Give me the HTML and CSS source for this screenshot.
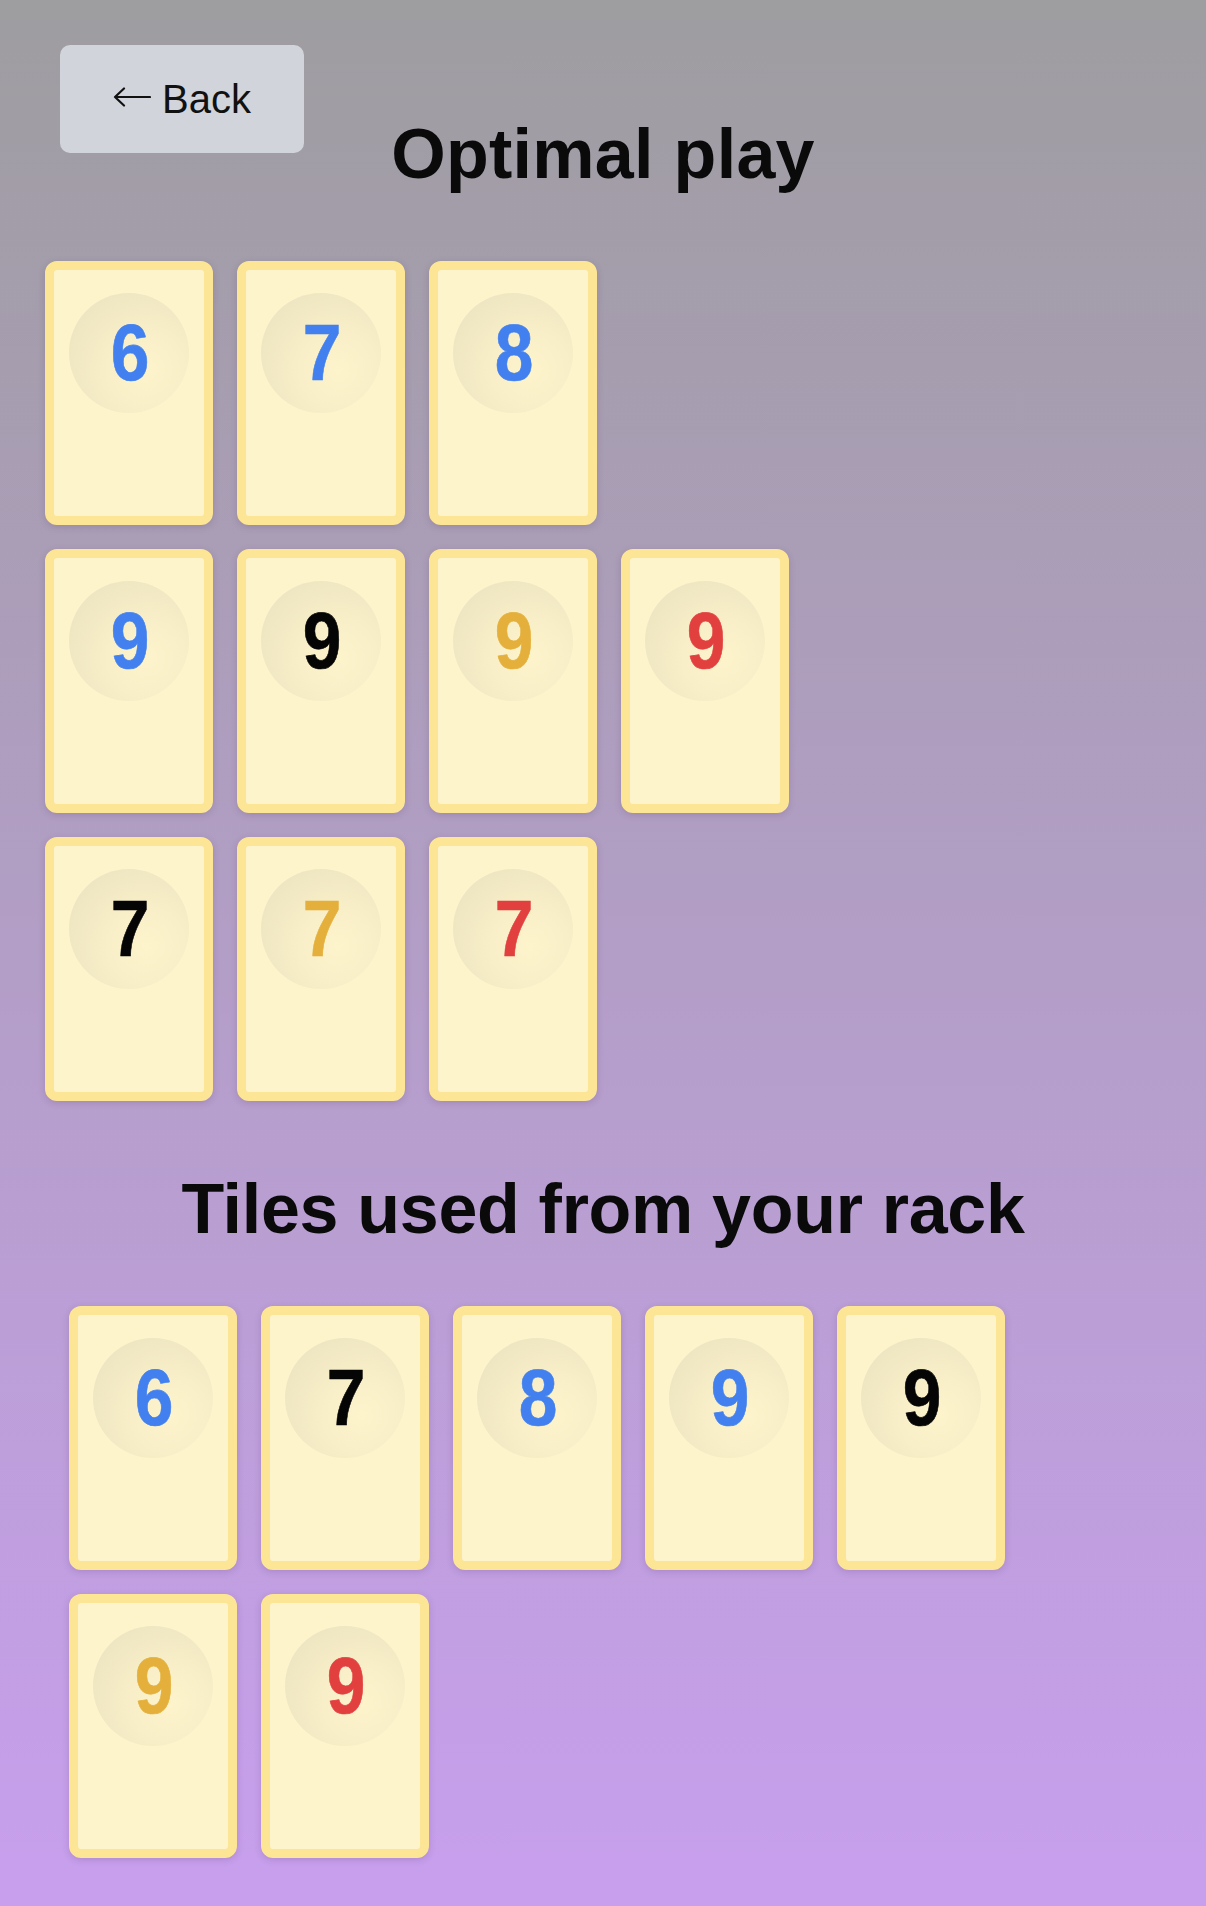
FILE: index.html
```html
<!DOCTYPE html>
<html lang="en">
<head>
<meta charset="utf-8">
<title>Optimal play</title>
<link rel="stylesheet" href="styles.css">
</head>
<body>
<button class="back-btn" type="button"><svg class="arrow" width="38" height="20" viewBox="0 0 38 20" aria-hidden="true"><path d="M37 10H2M11 1.5L2 10l9 8.5" fill="none" stroke="#111" stroke-width="2.2" stroke-linecap="round" stroke-linejoin="round"/></svg>Back</button>
<main class="page">
  <h1 class="title">Optimal play</h1>
  <section class="sets">
    <div class="set">
      <div class="tile"><div class="face"><span class="num blue">6</span></div></div>
      <div class="tile"><div class="face"><span class="num blue">7</span></div></div>
      <div class="tile"><div class="face"><span class="num blue">8</span></div></div>
    </div>
    <div class="set">
      <div class="tile"><div class="face"><span class="num blue">9</span></div></div>
      <div class="tile"><div class="face"><span class="num black">9</span></div></div>
      <div class="tile"><div class="face"><span class="num gold">9</span></div></div>
      <div class="tile"><div class="face"><span class="num red">9</span></div></div>
    </div>
    <div class="set">
      <div class="tile"><div class="face"><span class="num black">7</span></div></div>
      <div class="tile"><div class="face"><span class="num gold">7</span></div></div>
      <div class="tile"><div class="face"><span class="num red">7</span></div></div>
    </div>
  </section>
  <h2 class="title subtitle">Tiles used from your rack</h2>
  <section class="rack">
    <div class="tile"><div class="face"><span class="num blue">6</span></div></div>
    <div class="tile"><div class="face"><span class="num black">7</span></div></div>
    <div class="tile"><div class="face"><span class="num blue">8</span></div></div>
    <div class="tile"><div class="face"><span class="num blue">9</span></div></div>
    <div class="tile"><div class="face"><span class="num black">9</span></div></div>
    <div class="tile"><div class="face"><span class="num gold">9</span></div></div>
    <div class="tile"><div class="face"><span class="num red">9</span></div></div>
  </section>
</main>
</body>
</html>
```

FILE: styles.css
```css
html {
  height: 100%;
  background: linear-gradient(to bottom, #9e9da0 0%, #c89fee 100%);
}

body {
  margin: 0;
  min-height: 100%;
  font-family: "Liberation Sans", "DejaVu Sans", Arial, sans-serif;
  color: #0a0a0a;
  position: relative;
}

.back-btn {
  position: absolute;
  left: 60px;
  top: 45px;
  width: 244px;
  height: 108px;
  border: none;
  border-radius: 10px;
  background: #d1d5db;
  color: #111111;
  font-family: "Liberation Sans", "DejaVu Sans", Arial, sans-serif;
  font-size: 40px;
  line-height: 1;
  padding: 0;
  display: flex;
  align-items: center;
  justify-content: center;
  cursor: pointer;
}

.arrow {
  display: block;
  margin-right: 11px;
  position: relative;
  top: -2px;
}

.page {
  padding: 112px 45px 0;
}

.title {
  margin: 0 0 65px;
  font-size: 70px;
  line-height: 84px;
  font-weight: 700;
  text-align: center;
  letter-spacing: 0.3px;
}

.subtitle {
  margin: 66px 0 55px;
  letter-spacing: -0.3px;
}

.sets {
  display: flex;
  flex-direction: column;
  gap: 24px;
}

.set {
  display: flex;
  gap: 24px;
}

.rack {
  display: flex;
  flex-wrap: wrap;
  gap: 24px;
  padding-left: 24px;
}

.tile {
  width: 168px;
  height: 264px;
  box-sizing: border-box;
  border: 9px solid #fce594;
  border-radius: 12px;
  background: #fdf4cc;
  box-shadow: 0 2px 7px rgba(70, 40, 90, 0.18);
  flex: none;
}

.face {
  width: 120px;
  height: 120px;
  margin: 23px auto 0;
  border-radius: 50%;
  background: radial-gradient(circle at 64% 64%, #fdf4cc 0%, #f8efc8 35%, #ebe3c0 90%);
  display: flex;
  align-items: center;
  justify-content: center;
}

.num {
  font-family: "Liberation Sans", Arial, sans-serif;
  font-weight: 700;
  font-size: 79px;
  line-height: 1;
  display: inline-block;
  transform: scaleX(0.88);
  position: relative;
  top: -1px;
  left: 1px;
  -webkit-text-stroke: 0.6px currentColor;
}

.blue { color: #4280f0; }
.black { color: #050505; }
.gold { color: #e4b03b; }
.red { color: #e2403f; }
```
